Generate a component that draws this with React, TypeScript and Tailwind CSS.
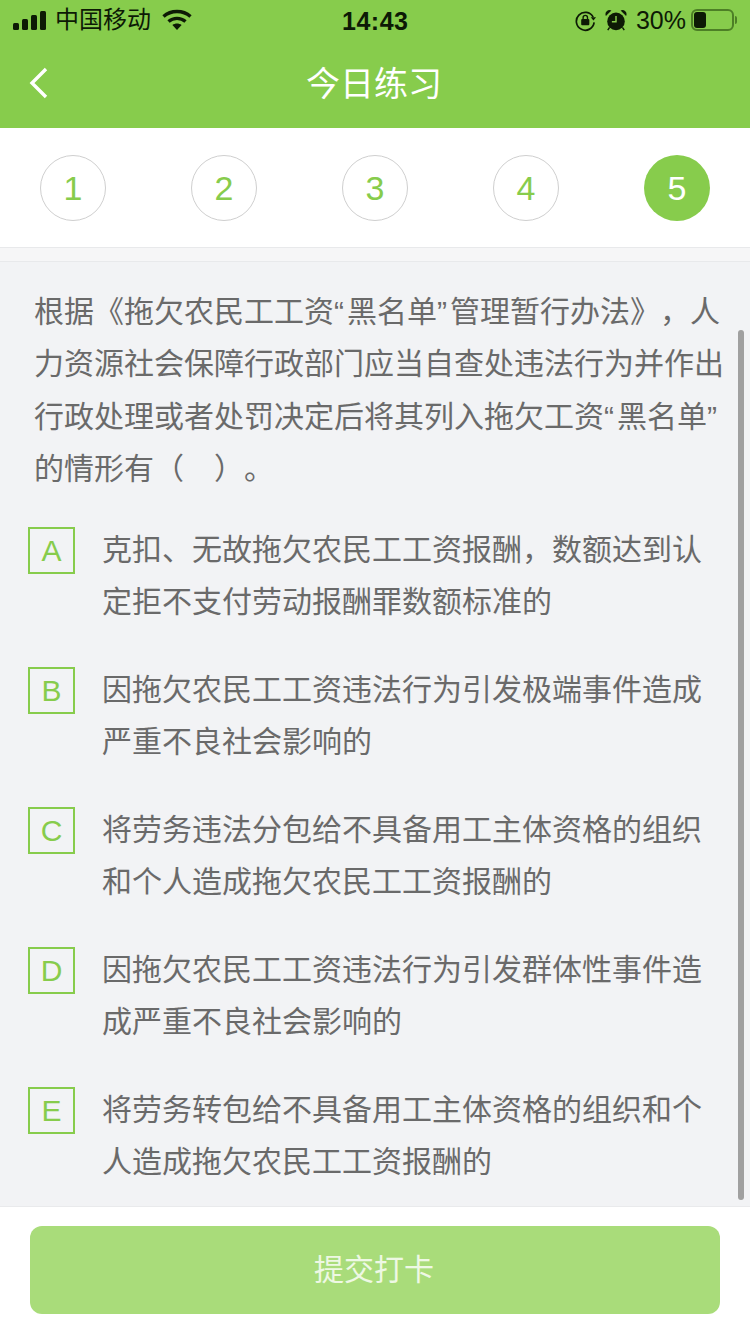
const steps = ['1', '2', '3', '4', '5']

const options = [
  { key: 'A', text: '克扣、无故拖欠农民工工资报酬，数额达到认定拒不支付劳动报酬罪数额标准的' },
  { key: 'B', text: '因拖欠农民工工资违法行为引发极端事件造成严重不良社会影响的' },
  { key: 'C', text: '将劳务违法分包给不具备用工主体资格的组织和个人造成拖欠农民工工资报酬的' },
  { key: 'D', text: '因拖欠农民工工资违法行为引发群体性事件造成严重不良社会影响的' },
  { key: 'E', text: '将劳务转包给不具备用工主体资格的组织和个人造成拖欠农民工工资报酬的' },
]

function StatusBar() {
  return (
    <div className="h-10 flex items-center justify-between pl-[13px] pr-[13px] text-[#0d1a05] relative">
      <div className="flex items-center">
        <svg width="34" height="20" viewBox="0 0 34 20" fill="currentColor">
          <rect x="0" y="13" width="6" height="7" rx="1.5" />
          <rect x="9" y="9" width="6" height="11" rx="1.5" />
          <rect x="18" y="5" width="6" height="15" rx="1.5" />
          <rect x="27" y="1" width="6" height="19" rx="1.5" />
        </svg>
        <span className="ml-[8px] text-[24px] leading-none">中国移动</span>
        <svg className="ml-[11px]" width="30" height="22" viewBox="0 0 30 22" fill="none" stroke="currentColor" strokeWidth="3.4">
          <path d="M1.5 7.5C9 .8 21 .8 28.5 7.5" />
          <path d="M6.5 12.5c4.8-4.2 12.2-4.2 17 0" />
          <path d="M15 21l-4.6-5c2.7-2 6.5-2 9.2 0z" fill="currentColor" stroke="none" />
        </svg>
      </div>
      <span className="absolute left-[342px] top-[7px] text-[25px] leading-[28px] font-semibold tracking-[0.5px]">14:43</span>
      <div className="flex items-center">
        <svg width="23" height="23" viewBox="0 0 24 24" fill="none" stroke="currentColor" strokeWidth="1.8">
          <path d="M20 8.5A9.3 9.3 0 1 0 21 14" />
          <path d="M17.5 8.5l5.5 0-2.7 3.6z" fill="currentColor" stroke="none" />
          <rect x="7.5" y="10.5" width="8.5" height="6.5" rx="1" fill="currentColor" stroke="none" />
          <path d="M9.5 10.5V9a2.3 2.3 0 0 1 4.6 0v1.5" strokeWidth="1.4" />
        </svg>
        <svg className="ml-[8px]" width="22" height="22" viewBox="0 0 24 24" fill="currentColor">
          <circle cx="12" cy="13.5" r="9.6" />
          <path d="M1 7.5a4.5 4.5 0 0 1 6-6zM23 7.5a4.5 4.5 0 0 0-6-6z" />
          <path d="M5 20l-2 3M19 20l2 3" stroke="currentColor" strokeWidth="1.6" />
          <path d="M12 7.5V14H7.5" fill="none" stroke="#87cc4c" strokeWidth="1.6" />
        </svg>
        <span className="ml-[9px] text-[25px] leading-none">30%</span>
        <div className="ml-[5px] w-[43px] h-[22px] rounded-[6px] border-2 border-[#4d7f26] p-[1px] flex">
          <div className="w-[12px] rounded-[3px] bg-[#0d1a05]" />
        </div>
        <div className="ml-[1px] w-[2px] h-[8px] rounded-r-full bg-[#4d7f26]" />
      </div>
    </div>
  )
}

export default function App() {
  return (
    <div className="w-[750px] h-[1334px] flex flex-col relative overflow-hidden bg-white [text-spacing-trim:space-all] font-['Liberation_Sans','Noto_Sans_CJK_SC',sans-serif]">
      {/* Header */}
      <div className="bg-[#87cc4c] h-[128px] shrink-0">
        <StatusBar />
        <div className="h-[88px] flex items-center justify-center relative">
          <svg className="absolute left-[28px] top-[27px]" width="22" height="32" viewBox="0 0 22 32" fill="none" stroke="white" strokeWidth="3.4">
            <path d="M18 2L4 16l14 14" />
          </svg>
          <span className="text-[34px] leading-none text-white pr-[2px]">今日练习</span>
        </div>
      </div>

      {/* Steps */}
      <div className="h-[119px] shrink-0 flex items-center justify-between px-10 pt-[1px]">
        {steps.map((s) =>
          s === '5' ? (
            <div key={s} className="w-[66px] h-[66px] rounded-full bg-[#87cc4c] text-white text-[34px] flex items-center justify-center">
              {s}
            </div>
          ) : (
            <div key={s} className="w-[66px] h-[66px] rounded-full border border-[#cfcfcf] text-[#87cc4c] text-[34px] flex items-center justify-center">
              {s}
            </div>
          ),
        )}
      </div>
      <div className="h-[15px] shrink-0 bg-[#f6f6f7] border-y border-[#e8e9eb]" />

      {/* Question */}
      <div className="flex-1 bg-[#f2f3f5] relative min-h-0">
        <p className="pl-[34px] pr-[20px] pt-[24px] text-[30px] leading-[52.4px] text-[#6a6a6a]">
          根据《拖欠农民工工资<span className="tracking-[3px]">“</span>黑名单<span className="tracking-[3px]">”</span>管理暂行办法》，人
          <br />
          力资源社会保障行政部门应当自查处违法行为并作出
          <br />
          行政处理或者处罚决定后将其列入拖欠工资<span className="tracking-[3px]">“</span>黑名单<span className="tracking-[3px]">”</span>
          <br />
          的情形有（　）。
        </p>
        <div className="mt-[31px] pl-[28px] pr-[45px] flex flex-col gap-[39px]">
          {options.map((o) => (
            <div key={o.key} className="flex items-start">
              <div className="w-[47px] h-[47px] shrink-0 border-2 border-[#87cc4c] text-[#87cc4c] text-[30px] flex items-center justify-center">
                {o.key}
              </div>
              <p className="ml-[27px] text-[30px] leading-[52px] text-[#6a6a6a] -mt-[3px]">{o.text}</p>
            </div>
          ))}
        </div>
        <div className="absolute left-[738px] top-[68px] w-[6px] h-[870px] rounded-full bg-[#a0a0a0]" />
      </div>

      {/* Submit */}
      <div className="h-[128px] shrink-0 border-t border-[#e9eaec] px-[30px] pt-[19px]">
        <div className="h-[88px] rounded-[12px] bg-[#a9dc7a] text-white/80 text-[30px] flex items-center justify-center pr-[2px] pb-[1px]">
          提交打卡
        </div>
      </div>
    </div>
  )
}
